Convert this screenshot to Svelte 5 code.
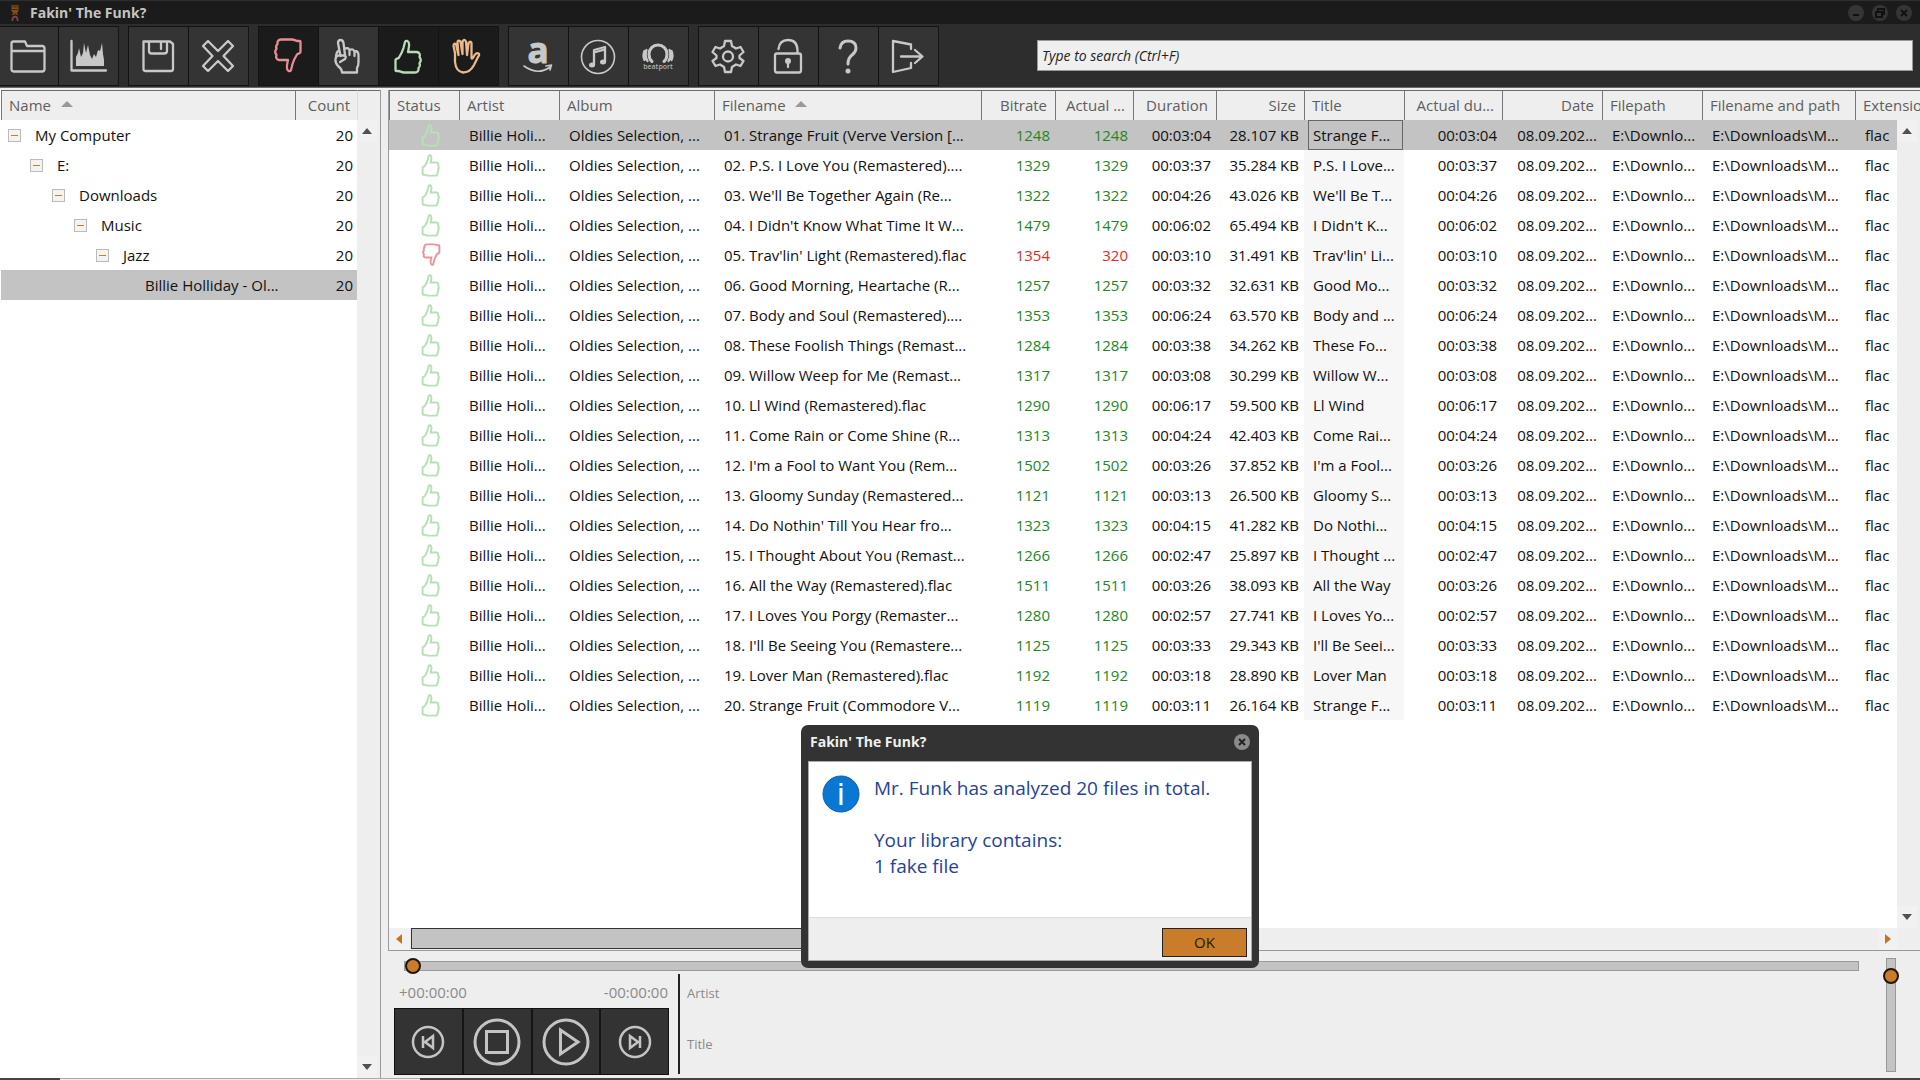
<script>
  const tree = [
    { name: 'My Computer', level: 0, count: 20, open: true },
    { name: 'E:', level: 1, count: 20, open: true },
    { name: 'Downloads', level: 2, count: 20, open: true },
    { name: 'Music', level: 3, count: 20, open: true },
    { name: 'Jazz', level: 4, count: 20, open: true },
    { name: 'Billie Holliday - Ol...', level: 5, count: 20, open: false }
  ];

  const columns = [
    { key: 'status', label: 'Status' },
    { key: 'artist', label: 'Artist' },
    { key: 'album', label: 'Album' },
    { key: 'filename', label: 'Filename', sorted: true },
    { key: 'bitrate', label: 'Bitrate', right: true },
    { key: 'actual', label: 'Actual ...', right: true },
    { key: 'duration', label: 'Duration', right: true },
    { key: 'size', label: 'Size', right: true },
    { key: 'title', label: 'Title' },
    { key: 'actual-duration', label: 'Actual du...', right: true },
    { key: 'date', label: 'Date', right: true },
    { key: 'filepath', label: 'Filepath' },
    { key: 'fullpath', label: 'Filename and path' },
    { key: 'extension', label: 'Extension' }
  ];

  const tracks = [
    ['01. Strange Fruit (Verve Version [...', 1248, 1248, '00:03:04', '28.107', 'Strange F...'],
    ['02. P.S. I Love You (Remastered)....', 1329, 1329, '00:03:37', '35.284', 'P.S. I Love...'],
    ["03. We'll Be Together Again (Re...", 1322, 1322, '00:04:26', '43.026', "We'll Be T..."],
    ["04. I Didn't Know What Time It W...", 1479, 1479, '00:06:02', '65.494', "I Didn't K..."],
    ["05. Trav'lin' Light (Remastered).flac", 1354, 320, '00:03:10', '31.491', "Trav'lin' Li..."],
    ['06. Good Morning, Heartache (R...', 1257, 1257, '00:03:32', '32.631', 'Good Mo...'],
    ['07. Body and Soul (Remastered)....', 1353, 1353, '00:06:24', '63.570', 'Body and ...'],
    ['08. These Foolish Things (Remast...', 1284, 1284, '00:03:38', '34.262', 'These Fo...'],
    ['09. Willow Weep for Me (Remast...', 1317, 1317, '00:03:08', '30.299', 'Willow W...'],
    ['10. Ll Wind (Remastered).flac', 1290, 1290, '00:06:17', '59.500', 'Ll Wind'],
    ['11. Come Rain or Come Shine (R...', 1313, 1313, '00:04:24', '42.403', 'Come Rai...'],
    ["12. I'm a Fool to Want You (Rem...", 1502, 1502, '00:03:26', '37.852', "I'm a Fool..."],
    ['13. Gloomy Sunday (Remastered...', 1121, 1121, '00:03:13', '26.500', 'Gloomy S...'],
    ["14. Do Nothin' Till You Hear fro...", 1323, 1323, '00:04:15', '41.282', 'Do Nothi...'],
    ['15. I Thought About You (Remast...', 1266, 1266, '00:02:47', '25.897', 'I Thought ...'],
    ['16. All the Way (Remastered).flac', 1511, 1511, '00:03:26', '38.093', 'All the Way'],
    ['17. I Loves You Porgy (Remaster...', 1280, 1280, '00:02:57', '27.741', 'I Loves Yo...'],
    ["18. I'll Be Seeing You (Remastere...", 1125, 1125, '00:03:33', '29.343', "I'll Be Seei..."],
    ['19. Lover Man (Remastered).flac', 1192, 1192, '00:03:18', '28.890', 'Lover Man'],
    ['20. Strange Fruit (Commodore V...', 1119, 1119, '00:03:11', '26.164', 'Strange F...']
  ].map(([filename, bitrate, actual, duration, size, title]) => ({
    filename, bitrate, actual, duration, size, title, fake: actual < bitrate
  }));

  const toolGroups = [
    ['folder', 'spectrum'],
    ['save', 'remove'],
    ['down', 'point', 'up', 'hand'],
    ['amazon', 'itunes', 'beatport'],
    ['settings', 'unlock', 'help', 'exit']
  ];
  const activeTools = ['down', 'up', 'hand'];

  let selectedNode = $state(5);
  let selectedTrack = $state(0);
  let showDialog = $state(true);
  let position = $state(0);
  let volume = $state(9);
  let search = $state('');
</script>

{#snippet thumb()}
  <path d="M6 19.500 C8.500 15.500 9.500 13.500 10.500 10 L12 4 C12.500 2 15.500 2.500 16 5.500 C16.500 8.500 15.500 11.500 15 14 H24 C26.500 14.500 27.500 16.500 26.500 19 C28 21 28 23.500 26.500 25 C27.500 27.500 26.500 29 25.500 30 C26 32.500 24.500 34.500 22 34.500 H11 C8.500 34.500 7 33 5.500 33 H3.500 C2.500 33 2.500 32.500 2.500 31.500 V22 C2.500 20.500 5 21 6 19.500 Z" />
{/snippet}

{#snippet icon(name)}
  <svg class="icon {name}" viewBox="0 0 36 36" aria-hidden="true">
    {#if name === 'folder'}
      <path d="M1.500 32 V5.500 Q1.500 3.500 3.500 3.500 H15 L17 8 H32 Q34.500 8 34.500 10.500 V31 Q34.500 33.500 32 33.500 H3.500 Q1.500 33.500 1.500 31 Z M1.500 13 H34.500" />
    {:else if name === 'spectrum'}
      <path d="M1.500 3 V32.500 H36" />
      <path class="solid" d="M6 28 V19 L8 15 L9 10 L11 19 L13 15 L14 5 L16 15 L18 7 L20 17 L22 21 L24 16 L26 19 L28 12 L30 13 L32 5 L33 16 L34 22 V28 Z" />
    {:else if name === 'save'}
      <path d="M3.500 3.500 H30 L33 6 V31 Q33 33 31 33 H5.500 Q3.500 33 3.500 31 Z M9 3.500 V13 Q9 15.500 11.500 15.500 H24 Q27 15.500 27 13 V3.500 M21 5 V11" />
    {:else if name === 'remove'}
      <path d="M3 8 L8 3 L18 13 L28 3 L33 8 L23.500 18 L33 28 L28 33 L18 23 L8 33 L3 28 L12.500 18 Z" />
    {:else if name === 'up'}
      <g transform="translate(3 0)">{@render thumb()}</g>
    {:else if name === 'down'}
      <g transform="translate(33 36) rotate(180)">{@render thumb()}</g>
    {:else if name === 'point'}
      <path d="M10.500 18 L8 5 Q8 2 10.500 2 Q13 2 13.500 5 L15 17 M14.500 11 Q18 9 19.500 12 V17 M19.500 12 Q23.500 10 24.500 14 V18 M24.500 13 Q28.500 13 28.500 17 V24 Q28.500 28 27 30 V34.500 H12 Q12 31 8 28 Q5 25 5.500 21 Q6 17 10 17.500 H14 Q17 18 15 21 L10 24 M8 13 Q6 15 6 20" />
    {:else if name === 'hand'}
      <path d="M5 15 L3.500 8 Q3.500 5 6 6 L8.500 17 L7.500 4 Q8 1.500 10.500 3.500 L12.500 16 L12.500 4 Q14 0 16 3.500 L17 17 L18.500 5 Q20.500 2.500 21.500 5 L21.500 20 Q22 21.500 23.500 19 Q26 14 28.500 15.500 Q30 16.500 28 19 L24 27 Q20 34.500 13 34.500 Q6 33.500 5 24 Z" />
    {:else if name === 'amazon'}
      <text class="amazon-letter" x="18" y="25" text-anchor="middle">a</text>
      <path class="thin" d="M4 28 Q18 38 30 29 M26 28 L31.500 27 L30 32" />
    {:else if name === 'itunes'}
      <circle class="thin" cx="18" cy="19" r="16.500" />
      <path d="M14 27 V12 L25 9 V24 M14 14.500 L25 11.500" />
      <ellipse class="solid" cx="12" cy="27" rx="3" ry="2.500" />
      <ellipse class="solid" cx="23" cy="24" rx="3" ry="2.500" />
    {:else if name === 'beatport'}
      <path class="thick" d="M12 23.500 Q9 21 9 16 A9 9 0 0 1 27 16 Q27 21 24 23.500" />
      <path d="M7.500 23 Q4.500 18 6.500 12 M28.500 23 Q31.500 18 29.500 12 M4.500 22 Q2.500 18 4.500 13 M31.500 22 Q33.500 18 31.500 13" />
      <text class="beatport-name" x="18" y="31" text-anchor="middle">beatport</text>
    {:else if name === 'settings'}
      <path d="M15 3 H21 L22 8 L26 10.500 L30.500 9 L33.500 14 L29.500 17.500 V20 L33.500 23 L30.500 28 L26 26.500 L22 29 L21 34 H15 L14 29 L10 26.500 L5.500 28 L2.500 23 L6.500 20 V17.500 L2.500 14 L5.500 9 L10 10.500 L14 8 Z" />
      <circle cx="18" cy="18.500" r="5" />
    {:else if name === 'unlock'}
      <path d="M7 15.500 H29 Q31 15.500 31 17.500 V32.500 Q31 34.500 29 34.500 H7 Q5 34.500 5 32.500 V17.500 Q5 15.500 7 15.500 Z M8.500 11 Q9.500 2 18 2 Q27 2 27.500 12 V15" />
      <circle class="solid" cx="18" cy="23" r="3" />
      <path d="M18 24 V29" />
    {:else if name === 'help'}
      <path class="thick" d="M10 10 Q11 3 18 3 Q26 3 26 10 Q26 14 22 17 Q18 20 18 26" />
      <circle class="solid" cx="18" cy="33" r="2.500" />
    {:else if name === 'exit'}
      <path d="M21 11 V6.500 L3 3 V34 L21 30 V25 M11 18.500 H32 M25 12 L32.500 18.500 L25 25" />
    {/if}
  </svg>
{/snippet}

<div class="window">
  <header class="titlebar">
    <svg class="app-logo" viewBox="0 0 16 20" aria-hidden="true">
      <path d="M4 1 H12 V8 L10 10 L12 12 H4 L6 10 L4 8 Z" fill="#8a4c16" />
      <path d="M5 3 H11 M5 6 H11 M8 10 V16" stroke="#33200f" stroke-width="1" />
      <path d="M5 19 Q5 14 8 14 Q11 14 11 19" fill="none" stroke="#7d4a48" stroke-width="2" />
    </svg>
    <h1>Fakin' The Funk?</h1>
    <div class="window-buttons">
      <button aria-label="Minimize"><svg viewBox="0 0 16 16"><path d="M5 10 H11" /></svg></button>
      <button aria-label="Restore"><svg viewBox="0 0 16 16"><path d="M6 6 V4 H12 V9 H10 M4 7 H10 V12 H4 Z" /></svg></button>
      <button aria-label="Close"><svg viewBox="0 0 16 16"><path d="M5 5 L11 11 M11 5 L5 11" /></svg></button>
    </div>
  </header>

  <div class="toolbar">
    {#each toolGroups as group}
      <div class="tool-group">
        {#each group as tool}
          <button class="tool" class:active={activeTools.includes(tool)} aria-label={tool}>
            {@render icon(tool)}
          </button>
        {/each}
      </div>
    {/each}
    <input class="search" type="text" placeholder="Type to search (Ctrl+F)" aria-label="Search" bind:value={search} />
  </div>

  <div class="content">
    <aside class="sidebar">
      <table class="tree">
        <thead>
          <tr>
            <th>Name <span class="sort"></span></th>
            <th class="count">Count</th>
            <th class="filler"></th>
          </tr>
        </thead>
        <tbody>
          {#each tree as node, i}
            <tr class:selected={selectedNode === i} onclick={() => (selectedNode = i)}>
              <td>
                <div class="node" style="padding-left: {node.level * 22}px">
                  {#if node.open}
                    <button class="toggle" aria-label="Collapse {node.name}"></button>
                  {:else}
                    <span class="toggle-space"></span>
                  {/if}
                  {node.name}
                </div>
              </td>
              <td class="count">{node.count}</td>
              <td></td>
            </tr>
          {/each}
        </tbody>
      </table>
      <div class="vbar">
        <button class="arrow-up" aria-label="Scroll up"></button>
        <button class="arrow-down" aria-label="Scroll down"></button>
      </div>
    </aside>

    <div class="splitter"></div>

    <main>
      <section class="list">
        <div class="list-body">
          <table class="tracks">
            <colgroup>
              {#each columns as col}
                <col class="col-{col.key}" />
              {/each}
            </colgroup>
            <thead>
              <tr>
                {#each columns as col}
                  <th class:right={col.right}>
                    {col.label}
                    {#if col.sorted}<span class="sort"></span>{/if}
                  </th>
                {/each}
              </tr>
            </thead>
            <tbody>
              {#each tracks as track, i}
                <tr class:selected={selectedTrack === i} onclick={() => (selectedTrack = i)}>
                  <td class="status">
                    <svg class="mark" class:fake={track.fake} viewBox="0 0 31 36" role="img" aria-label={track.fake ? 'Fake' : 'OK'}>
                      {@render thumb()}
                    </svg>
                  </td>
                  <td>Billie Holi...</td>
                  <td>Oldies Selection, ...</td>
                  <td>{track.filename}</td>
                  <td class="right rate" class:fake={track.fake}>{track.bitrate}</td>
                  <td class="right rate" class:fake={track.fake}>{track.actual}</td>
                  <td class="right">{track.duration}</td>
                  <td class="right">{track.size} KB</td>
                  <td class="title"><span>{track.title}</span></td>
                  <td class="right">{track.duration}</td>
                  <td class="right">08.09.202...</td>
                  <td>E:\Downlo...</td>
                  <td>E:\Downloads\M...</td>
                  <td>flac</td>
                </tr>
              {/each}
            </tbody>
          </table>
          <div class="vbar">
            <button class="arrow-up" aria-label="Scroll up"></button>
            <button class="arrow-down" aria-label="Scroll down"></button>
          </div>
        </div>
        <div class="hbar">
          <button class="arrow-left" aria-label="Scroll left"></button>
          <div class="hbar-track"><div class="hbar-thumb"></div></div>
          <button class="arrow-right" aria-label="Scroll right"></button>
        </div>
      </section>

      <section class="player">
        <div class="player-main">
          <input class="seek" type="range" min="0" max="100" aria-label="Position" bind:value={position} />
          <div class="player-row">
            <div class="transport">
              <div class="times">
                <span>+00:00:00</span>
                <span>-00:00:00</span>
              </div>
              <div class="transport-buttons">
                <button aria-label="Previous">
                  <svg class="small" viewBox="0 0 34 34">
                    <circle cx="17" cy="17" r="15" />
                    <path d="M12 11 V23 M22 11 L14 17 L22 23 Z" />
                  </svg>
                </button>
                <button aria-label="Stop">
                  <svg viewBox="0 0 48 48">
                    <circle cx="24" cy="24" r="22" />
                    <path d="M13.500 13.500 H34.500 V34.500 H13.500 Z" />
                  </svg>
                </button>
                <button aria-label="Play">
                  <svg viewBox="0 0 48 48">
                    <circle cx="24" cy="24" r="22" />
                    <path d="M18.500 12 L36 24 L18.500 36 Z" />
                  </svg>
                </button>
                <button aria-label="Next">
                  <svg class="small" viewBox="0 0 34 34">
                    <circle cx="17" cy="17" r="15" />
                    <path d="M22 11 V23 M12 11 L20 17 L12 23 Z" />
                  </svg>
                </button>
              </div>
            </div>
            <div class="now-playing">
              <span>Artist</span>
              <span>Title</span>
            </div>
          </div>
        </div>
        <input class="volume" type="range" min="0" max="100" aria-label="Volume" bind:value={volume} />
      </section>
    </main>
  </div>

  <footer><span class="edge-left"></span><span class="edge-right"></span></footer>

  {#if showDialog}
    <div class="dialog" role="dialog" aria-labelledby="dialog-title">
      <div class="dialog-title">
        <h2 id="dialog-title">Fakin' The Funk?</h2>
        <button aria-label="Close" onclick={() => (showDialog = false)}>
          <svg viewBox="0 0 16 16"><path d="M5 5 L11 11 M11 5 L5 11" /></svg>
        </button>
      </div>
      <div class="dialog-body">
        <div class="message">
          <svg class="info" viewBox="0 0 38 38" aria-hidden="true">
            <circle cx="19" cy="19" r="18" />
            <path d="M19 8 V11 M19 13 V30" />
          </svg>
          <div>
            <p>Mr. Funk has analyzed 20 files in total.</p>
            <p class="library">Your library contains:<br />1 fake file</p>
          </div>
        </div>
        <div class="dialog-actions">
          <button class="ok" onclick={() => (showDialog = false)}>OK</button>
        </div>
      </div>
    </div>
  {/if}
</div>

<style>
  :global(body) {
    margin: 0;
    background: #eee;
  }

  .window {
    position: relative;
    display: flex;
    flex-direction: column;
    min-height: 100vh;
    overflow: hidden;
    font-family: 'Open Sans', 'Noto Sans', sans-serif;
    font-size: 15px;
    color: #111;
  }

  .window * {
    box-sizing: border-box;
  }

  button {
    padding: 0;
    border: none;
    background: none;
    font: inherit;
    color: inherit;
  }

  svg {
    display: block;
    fill: none;
  }

  .titlebar {
    display: flex;
    align-items: center;
    height: 24px;
    padding: 0 8px;
    background: #1b1b1b;
    border-top: 1px solid #2e2e2e;
  }

  .app-logo {
    width: 14px;
    height: 20px;
    margin-right: 8px;
  }

  h1,
  h2 {
    margin: 0;
    font-size: 14px;
    line-height: 20px;
    font-weight: 700;
    color: #c4c4c4;
  }

  .window-buttons {
    display: flex;
    gap: 8px;
    margin-left: auto;
  }

  .window-buttons button {
    width: 16px;
    height: 16px;
    border-radius: 50%;
    background: #353535;
  }

  .window-buttons svg {
    stroke: #111;
    stroke-width: 2;
  }

  .toolbar {
    display: flex;
    align-items: center;
    gap: 10px;
    height: 64px;
    padding: 2px 7px 2px 0;
    background: #2d2d2d;
    border-bottom: 1px solid #6a6a6a;
  }

  .tool-group {
    display: flex;
    box-shadow: 1px 0 #151515;
  }

  .tool {
    display: flex;
    align-items: center;
    justify-content: center;
    width: 60px;
    height: 60px;
    padding-right: 2px;
    background: #343434;
    border: 1px solid #121212;
    border-right: none;
  }

  .tool-group:first-child .tool:first-child {
    width: 58px;
    border-left: none;
  }

  .tool.active {
    background: #1b1b1b;
  }

  .icon {
    width: 36px;
    height: 36px;
    overflow: visible;
    stroke: #c8c8c8;
    stroke-width: 2.3;
    stroke-linejoin: round;
    stroke-linecap: round;
  }

  .icon.up {
    stroke: #b5dcb5;
  }

  .icon.down {
    stroke: #e88d94;
  }

  .icon.hand {
    stroke: #e9b98c;
  }

  .icon .solid {
    fill: #c8c8c8;
    stroke: none;
  }

  .icon .thin {
    stroke-width: 1.6;
  }

  .icon .thick {
    stroke-width: 3;
  }

  .amazon-letter {
    fill: #c8c8c8;
    stroke: #c8c8c8;
    stroke-width: 1;
    font-size: 35px;
    font-weight: 700;
  }

  .beatport-name {
    fill: #b0b0b0;
    stroke: none;
    font-size: 7px;
    font-weight: 600;
  }

  .search {
    flex: 1;
    height: 31px;
    margin-left: 89px;
    padding: 0 4px;
    border: 1px solid #999;
    border-radius: 0;
    background: #efefef;
    font: italic 14px 'Open Sans', sans-serif;
    outline: none;
  }

  .search::placeholder {
    color: #222;
    opacity: 1;
  }

  .content {
    display: flex;
    flex: 1;
    padding-top: 2px;
  }

  .sidebar {
    position: relative;
    width: 381px;
    padding-left: 1px;
    background: #fff;
    border-right: 1px solid #999;
  }

  .splitter {
    width: 7px;
  }

  table {
    width: 100%;
    border-collapse: separate;
    border-spacing: 0;
    table-layout: fixed;
  }

  th {
    height: 30px;
    padding: 0 7px 2px;
    background: #eee;
    border-top: 1px solid #6a6a6a;
    border-left: 1px solid #777;
    font-weight: 400;
    font-size: 15px;
    line-height: 20px;
    color: #5e5e5e;
    text-align: left;
    white-space: nowrap;
    overflow: hidden;
  }

  td {
    height: 30px;
    padding: 0 0 0 10px;
    font-size: 15px;
    line-height: 20px;
    white-space: nowrap;
    overflow: hidden;
  }

  tr.selected td {
    background: #c3c3c3;
  }

  .right {
    text-align: right;
  }

  th.right {
    padding-right: 8px;
  }

  td.right {
    padding: 0 5px 0 0;
  }

  .sort {
    display: inline-block;
    margin: 0 0 4px 6px;
    border: 6px solid transparent;
    border-top: none;
    border-bottom: 6px solid #999;
  }

  .tree th.count {
    width: 62px;
    text-align: right;
  }

  .tree th.filler {
    width: 23px;
    border-left-color: #ddd;
  }

  .tree td {
    padding-left: 7px;
  }

  .tree td.count {
    padding: 0 4px 0 0;
    text-align: right;
  }

  .node {
    display: flex;
    align-items: center;
  }

  .toggle,
  .toggle-space {
    flex-shrink: 0;
    width: 13px;
    height: 13px;
    margin-right: 14px;
  }

  .toggle {
    display: flex;
    align-items: center;
    justify-content: center;
    background: #f3f3f0;
    border: 1px solid #bbb;
  }

  .toggle::before {
    content: '';
    width: 7px;
    height: 1px;
    background: #c27a2c;
  }

  .vbar {
    position: absolute;
    top: 30px;
    right: 0;
    bottom: 0;
    display: flex;
    flex-direction: column;
    justify-content: space-between;
    width: 23px;
    background: #eee;
  }

  .vbar button,
  .hbar button {
    display: flex;
    align-items: center;
    justify-content: center;
    width: 20px;
    height: 22px;
    background: #f1f1f1;
  }

  .arrow-up::before {
    content: '';
    border: 5px solid transparent;
    border-top: none;
    border-bottom: 6px solid #505050;
  }

  .arrow-down::before {
    content: '';
    border: 5px solid transparent;
    border-bottom: none;
    border-top: 6px solid #505050;
  }

  .arrow-left::before {
    content: '';
    border: 5px solid transparent;
    border-left: none;
    border-right: 6px solid #c9741c;
  }

  .arrow-right::before {
    content: '';
    border: 5px solid transparent;
    border-right: none;
    border-left: 6px solid #c9741c;
  }

  main {
    display: flex;
    flex: 1;
    flex-direction: column;
    min-width: 0;
  }

  .list {
    display: flex;
    flex: 1;
    flex-direction: column;
    border-left: 1px solid #999;
    border-bottom: 1px solid #999;
  }

  .list-body {
    position: relative;
    flex: 1;
    background: #fff;
  }

  .col-status {
    width: 70px;
  }

  .col-artist,
  .col-title,
  .col-date,
  .col-filepath {
    width: 100px;
  }

  .col-album {
    width: 155px;
  }

  .col-filename {
    width: 267px;
  }

  .col-bitrate {
    width: 74px;
  }

  .col-actual {
    width: 78px;
  }

  .col-duration {
    width: 83px;
  }

  .col-size {
    width: 88px;
  }

  .col-actual-duration {
    width: 98px;
  }

  .col-fullpath {
    width: 153px;
  }

  td.status {
    padding-left: 32px;
  }

  .mark {
    width: 20px;
    height: 24px;
    stroke: #b9dfb9;
    stroke-width: 3;
  }

  .mark.fake {
    stroke: #e5959d;
    transform: rotate(180deg);
  }

  .rate {
    color: #21861f;
  }

  .rate.fake {
    color: #e8262b;
  }

  td.title {
    padding: 0 1px 0 4px;
    background: #f7f7f7;
  }

  .title span {
    display: block;
    padding: 4px 0 4px 4px;
    border: 1px solid transparent;
  }

  .selected .title span {
    border-color: #666;
  }

  .hbar {
    display: flex;
    height: 22px;
    padding-right: 22px;
    background: #eee;
  }

  .hbar-track {
    flex: 1;
    padding-left: 2px;
  }

  .hbar-thumb {
    width: 46%;
    height: 21px;
    background: #c3c3c3;
    border: 1px solid #333;
  }

  .player {
    display: flex;
    justify-content: space-between;
    padding: 7px 21px 3px 6px;
  }

  .player-main {
    flex: 1;
  }

  input[type='range'] {
    appearance: none;
    margin: 0;
    background: none;
  }

  input.seek {
    display: block;
    width: calc(100% - 34px);
    height: 16px;
    margin-left: 10px;
  }

  .seek::-webkit-slider-runnable-track {
    height: 10px;
    background: #c3c3c3;
    border: 1px solid #999;
  }

  input[type='range']::-webkit-slider-thumb {
    appearance: none;
    width: 16px;
    height: 16px;
    background: #c97d2a;
    border: 2px solid #20160a;
    border-radius: 50%;
  }

  .seek::-webkit-slider-thumb {
    margin-top: -4px;
  }

  input.volume {
    width: 16px;
    height: 114px;
    writing-mode: vertical-lr;
  }

  .volume::-webkit-slider-runnable-track {
    width: 10px;
    background: #c3c3c3;
    border: 1px solid #999;
  }

  .volume::-webkit-slider-thumb {
    margin-left: -4px;
  }

  .player-row {
    display: flex;
    gap: 9px;
  }

  .transport {
    width: 275px;
  }

  .times {
    display: flex;
    justify-content: space-between;
    padding: 8px 1px 6px 5px;
    font-size: 15px;
    line-height: 20px;
    color: #8a8a8a;
  }

  .transport-buttons {
    display: flex;
    height: 67px;
    background: #333;
    border: 1px solid #111;
  }

  .transport-buttons button {
    display: flex;
    flex: 1;
    align-items: center;
    justify-content: center;
  }

  .transport-buttons button + button {
    border-left: 2px solid #151515;
  }

  .transport-buttons svg {
    width: 48px;
    height: 48px;
    stroke: #c4c4c4;
    stroke-width: 3;
  }

  .transport-buttons svg.small {
    width: 34px;
    height: 34px;
    stroke-width: 2.5;
  }

  .now-playing {
    display: flex;
    flex-direction: column;
    gap: 31px;
    height: 100px;
    padding: 9px 0 0 7px;
    border-left: 2px solid #222;
    font-size: 13px;
    line-height: 20px;
    color: #8a8a8a;
  }

  footer {
    display: flex;
    height: 2px;
    border-top: 1px solid #aaa;
  }

  .edge-left,
  .edge-right {
    height: 2px;
    margin-top: -1px;
    background: #444;
  }

  .edge-left {
    width: 60px;
  }

  .edge-right {
    flex: 1;
    margin-left: 360px;
  }

  .dialog {
    position: absolute;
    top: 725px;
    left: 801px;
    width: 458px;
    padding: 0 7px 7px;
    background: #333;
    border-radius: 7px;
  }

  .dialog-title {
    display: flex;
    align-items: center;
    justify-content: space-between;
    height: 36px;
    padding: 0 2px 2px;
  }

  .dialog-title h2 {
    color: #f0f0f0;
  }

  .dialog-title button {
    width: 16px;
    height: 16px;
    border-radius: 50%;
    background: #8a8a8a;
  }

  .dialog-title svg {
    stroke: #222;
    stroke-width: 2;
  }

  .dialog-body {
    background: #fff;
    border: 1px solid #aaa;
  }

  .message {
    display: flex;
    gap: 14px;
    min-height: 155px;
    padding: 13px;
  }

  .info {
    width: 38px;
    height: 38px;
  }

  .info circle {
    fill: #0878d4;
    stroke: #0d5fa5;
    stroke-width: 1;
  }

  .info path {
    stroke: #fff;
    stroke-width: 3;
  }

  .message p {
    margin: 0;
    font-size: 19px;
    line-height: 26px;
    color: #1f4399;
    white-space: nowrap;
  }

  .message .library {
    margin-top: 26px;
  }

  .dialog-actions {
    display: flex;
    justify-content: flex-end;
    height: 43px;
    padding: 10px 4px 0 0;
    background: #eee;
    border-top: 1px solid #ddd;
  }

  .ok {
    width: 85px;
    height: 29px;
    padding-bottom: 2px;
    background: #c97d2a;
    border: 1px solid #222;
    color: #2b1a06;
    font-size: 15px;
  }
</style>
